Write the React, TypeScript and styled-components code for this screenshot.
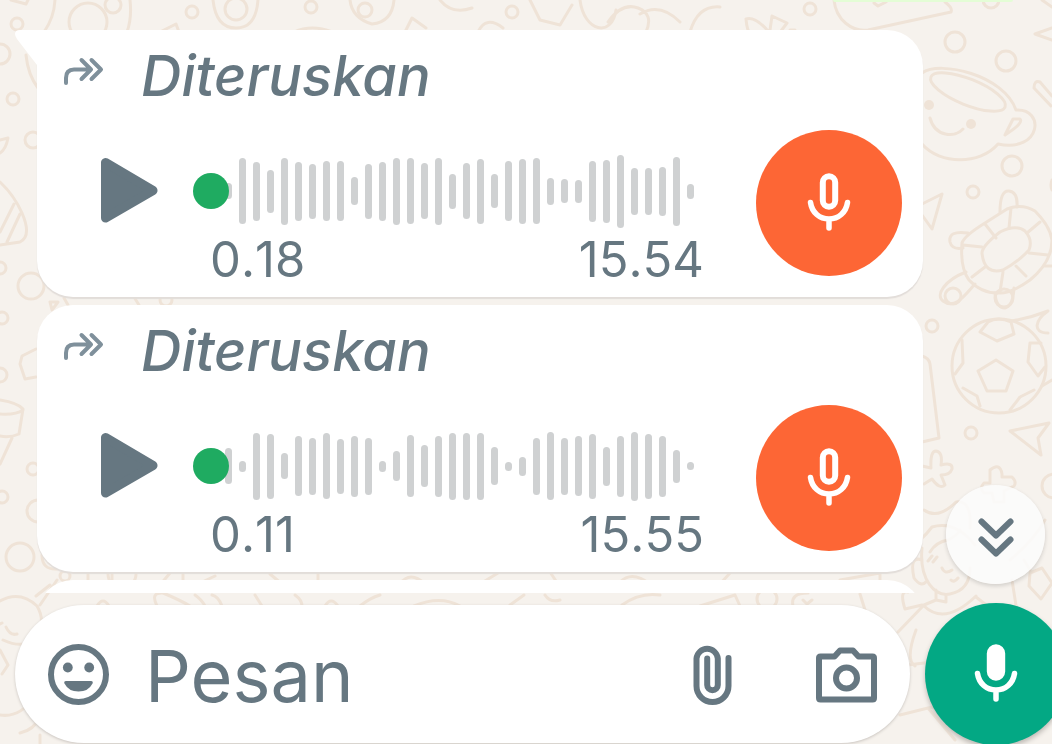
import React from "react";
import styled, { createGlobalStyle } from "styled-components";

const ink = "#667781";

const GlobalStyle = createGlobalStyle`
  * { box-sizing: border-box; }
  body { margin: 0; background: #f6f2ed; font-family: Inter, Roboto, sans-serif; color: ${ink}; }
  button { border: 0; padding: 0; background: none; color: inherit; cursor: pointer; }
`;

const Screen = styled.div`
  position: relative;
  isolation: isolate;
  display: flex;
  flex-direction: column;
  height: 100vh;
  overflow: hidden;
`;

const WallpaperArt = styled.svg`
  position: absolute;
  inset: 0;
  z-index: -1;
  width: 100%;
  height: 100%;
  fill: none;
  stroke: #efe3d7;
  stroke-width: 3;
  stroke-linejoin: round;
  stroke-linecap: round;
`;

const Messages = styled.main`
  flex: 1;
  min-height: 0;
  overflow: hidden;
  display: flex;
  flex-direction: column;
  gap: 8px;
  padding-right: 129px;
  padding-left: 37px;
`;

const OutgoingBubble = styled.div`
  flex: none;
  align-self: flex-end;
  width: 180px;
  height: 2px;
  margin-right: -90px;
  margin-bottom: 20px;
  border-radius: 0 0 8px 8px;
  background: #e4fdd6;
`;

const Bubble = styled.article`
  position: relative;
  flex: none;
  min-height: 267px;
  padding: 18px 21px 21px 25px;
  border-radius: ${(p: { $tail?: boolean }) => (p.$tail ? "0 36px 36px 36px" : "36px")};
  background: #fff;
  box-shadow: 0 2px 1px #e2ddd9;
`;

const Tail = styled.svg`
  position: absolute;
  top: 0;
  left: -22px;
  width: 24px;
  height: 38px;
`;

const Forwarded = styled.header`
  display: flex;
  align-items: center;
  gap: 37px;
  height: 56px;
  margin-bottom: 26px;
  font-size: 56px;
  font-style: italic;
  font-weight: 500;
  line-height: 56px;
`;

const ForwardIcon = styled.svg`
  flex: none;
  width: 42px;
  height: 32px;
  margin-bottom: 8px;
  fill: none;
  stroke: #7f909b;
  stroke-width: 4;
  stroke-linecap: round;
  stroke-linejoin: round;
`;

const Player = styled.div`
  display: flex;
  align-items: flex-start;
`;

const PlayButton = styled.button`
  flex: none;
  width: 60px;
  height: 68px;
  margin: 26px 34px 0 37px;

  svg { display: block; }
`;

const Timeline = styled.div`
  flex: 1;
  min-width: 0;
  margin-right: 52px;
  padding-top: 23px;
`;

const Scrubber = styled.div`
  display: grid;
  height: 76px;
  align-items: center;

  > * { grid-area: 1 / 1; }
`;

const Bars = styled.div`
  display: flex;
  align-items: center;
  justify-content: space-between;
  padding: 0 10px 0 32px;
`;

const Bar = styled.span`
  width: 7px;
  border-radius: 4px;
  background: #cfd1d2;
`;

const Seek = styled.input`
  appearance: none;
  width: 100%;
  height: 36px;
  margin: 0;
  background: transparent;

  &::-webkit-slider-thumb {
    appearance: none;
    width: 36px;
    height: 36px;
    border-radius: 50%;
    background: #1fab61;
  }
`;

const Times = styled.div`
  display: flex;
  justify-content: space-between;
  height: 47px;
  padding-left: 17px;
  font-size: 49px;
  font-kerning: none;
  line-height: 62px;
`;

const VoiceAvatar = styled.div`
  display: grid;
  place-items: center;
  flex: none;
  width: 146px;
  height: 146px;
  border-radius: 50%;
  background: #fd6635;
`;

const Footer = styled.footer`
  display: flex;
  align-items: center;
  gap: 15px;
  flex: none;
  padding: 10px 0 0 15px;
`;

const Composer = styled.form`
  display: flex;
  align-items: center;
  flex: 1;
  min-width: 0;
  height: 138px;
  padding: 0 32px;
  border-radius: 69px;
  background: #fff;
  box-shadow: 0 1px 3px #c9c4bf;
`;

const IconButton = styled.button`
  flex: none;
  width: 64px;
  height: 64px;
  margin-left: ${(p: { $gap?: number }) => p.$gap ?? 0}px;

  svg {
    display: block;
    fill: none;
    stroke: ${ink};
    stroke-width: 6;
    stroke-linejoin: round;
    stroke-linecap: round;
  }
`;

const MessageInput = styled.input`
  flex: 1;
  min-width: 0;
  height: 96px;
  padding: 4px 0 0;
  margin-left: 34px;
  border: 0;
  outline: 0;
  background: transparent;
  color: ${ink};
  font: 400 72px Inter, Roboto, sans-serif;

  &::placeholder { color: ${ink}; opacity: 1; }
`;

const RecordButton = styled.button`
  display: grid;
  place-items: center;
  flex: none;
  width: 142px;
  height: 142px;
  margin-right: -15px;
  margin-bottom: -1px;
  border-radius: 50%;
  && { background: #03a884; }
  box-shadow: 0 3px 5px #bdb9b4;
`;

const ScrollDown = styled.button`
  position: absolute;
  right: 7px;
  bottom: 160px;
  display: grid;
  place-items: center;
  width: 99px;
  height: 99px;
  padding-top: 4px;
  border-radius: 50%;
  && { background: rgba(252, 252, 252, 0.88); }
  box-shadow: 0 2px 4px rgba(0, 0, 0, 0.15);
`;

function MicIcon({ filled }: { filled?: boolean }) {
  return (
    <svg width="44" height="60" viewBox="0 0 44 60" fill="none" stroke="#fff" strokeWidth="5.5" strokeLinecap="round" aria-hidden="true">
      <rect x="15.8" y="3.2" width="12.4" height="30.6" rx="6.2" fill={filled ? "#fff" : "none"} strokeWidth="6" />
      <path d="M3.5 29.5C5 39.500 12.500 46 22 46S39 39.500 40.500 29.500M22 46v9" />
    </svg>
  );
}

type Voice = { position: string; length: string; levels: number[]; tail?: boolean };

const voices: Voice[] = [
  {
    position: "0.18",
    length: "15.54",
    tail: true,
    levels: [16, 66, 59, 43, 67, 59, 55, 60, 60, 28, 55, 59, 67, 66, 56, 67, 35, 56, 65, 34, 60, 65, 66, 27, 24, 23, 61, 63, 73, 47, 47, 49, 69, 15],
  },
  {
    position: "0.11",
    length: "15.55",
    levels: [36, 11, 67, 65, 26, 60, 57, 66, 55, 61, 57, 11, 30, 62, 42, 61, 67, 67, 67, 38, 9, 19, 57, 68, 57, 60, 65, 39, 61, 69, 65, 61, 33, 8],
  },
];

function VoiceMessage({ position, length, levels, tail }: Voice) {
  return (
    <Bubble $tail={tail}>
      {tail && (
        <Tail viewBox="0 0 24 38" aria-hidden="true">
          <path d="M0 4Q0 0 5 0H24V38L22 35L2 9Q0 6 0 4Z" fill="#fff" />
        </Tail>
      )}
      <Forwarded>
        <ForwardIcon viewBox="0 0 42 32" aria-hidden="true">
          <path d="M4 27V22Q4 13.500 12 13.500H29M19.500 4L29 13.500L19.500 23M29.500 4L39 13.500L29.500 23" />
        </ForwardIcon>
        Diteruskan
      </Forwarded>
      <Player>
        <PlayButton type="button" aria-label="Putar">
          <svg width="60" height="68" viewBox="0 0 60 68" fill={ink} stroke={ink} strokeWidth="9" strokeLinejoin="round">
            <path d="M6.500 6.500V62L54 34.500Z" />
          </svg>
        </PlayButton>
        <Timeline>
          <Scrubber>
            <Bars aria-hidden="true">
              {levels.map((level, i) => (
                <Bar key={i} style={{ height: level }} />
              ))}
            </Bars>
            <Seek type="range" min="0" max="100" defaultValue="0" aria-label="Posisi pesan suara" />
          </Scrubber>
          <Times>
            <span>{position}</span>
            <span>{length}</span>
          </Times>
        </Timeline>
        <VoiceAvatar>
          <MicIcon />
        </VoiceAvatar>
      </Player>
    </Bubble>
  );
}

function Wallpaper() {
  const rings = [
    [88, 22, 19], [113, 5, 8], [192, 12, 6], [17, 24, 6], [0, 54, 10], [13, 99, 6], [236, 9, 11], [311, 7, 6],
    [33, 140, 8], [0, 268, 6], [31, 286, 13], [2, 318, 6], [0, 375, 7], [33, 469, 6], [2, 497, 6], [38, 511, 11],
    [20, 557, 14], [65, 576, 5], [122, 574, 14], [365, 10, 7], [512, 12, 6], [810, 9, 6], [955, 42, 10],
    [1006, 61, 10], [1012, 166, 10], [973, 192, 6], [932, 326, 6], [971, 433, 6], [1054, 486, 12], [999, 366, 47],
    [991, 0, 8], [953, 296, 8], [1004, 298, 9], [767, 599, 10], [166, 300, 6],
  ];
  return (
    <WallpaperArt viewBox="0 0 1052 744" preserveAspectRatio="xMidYMid slice" aria-hidden="true">
      {rings.map(([x, y, r]) => (
        <circle key={`${x}-${y}`} cx={x} cy={y} r={r} />
      ))}
      <path d="M55 0Q54 18 44 32M130 0Q132 18 127 32M11 0L26 4L28 0M213 0Q216 28 236 28T258 0M160 32L176 24L179 32M294 32Q312 24 332 32M26 55Q28 75 38 88" />
      <path d="M350 0Q352 18 372 24Q392 22 394 0M405 32L412 18L426 28M440 0Q452 15 472 8M478 32Q486 15 503 28M530 0L540 20L560 25L572 5M580 0C584 32 612 38 616 10M608 22Q622 2 638 8T646 32M640 14Q660 2 680 22M690 32Q698 5 720 7M746 19Q755 16 768 31M746 19Q747 30 750 34M770 30L772 16L787 23L781 31M790 30H795" />
      <path d="M834 0C836 20 852 32 868 30L951 12Q953 8 945 2M874 3L878 6L886 2M1042 0L1052 7M1052 28L1035 34L1052 40M1052 96L1040 82Q1034 80 1034 88L1051 106" />
      <path d="M922 73C940 60 1004 75 1016 110C1045 108 1042 153 998 144C980 165 940 165 922 144M930 118C935 137 955 138 963 129M1005 135L1013 119H1020Q1024 123 1005 135" />
      <ellipse cx="968" cy="92" rx="40" ry="13" transform="rotate(22 968 92)" />
      <g fill="#efe3d7" stroke="none">
        <circle cx="929" cy="105" r="5" />
        <circle cx="971" cy="124" r="5" />
      </g>
      <path d="M920 205L942 194L932 229L922 215M1052 180Q1050 185 1052 190" />
      <path d="M962 243Q964 236 985 223L1007 209Q1022 203 1035 211Q1050 226 1052 240Q1052 262 1030 280Q1012 293 1000 293Q982 294 969 280Q960 268 962 243ZM982 253Q982 246 1000 232Q1016 224 1025 231Q1033 240 1029 250Q1018 262 1003 270Q984 275 982 253Z" />
      <path d="M1011 208L1009 228M1040 222L1027 233M1048 255L1029 253M1026 276L1016 266M1000 292L1003 272M972 277L985 267M963 245L982 247M985 224L996 238M1000 212Q1000 190 1009 191T1017 207M968 233Q948 230 950 242Q952 250 963 248M966 272C945 280 935 295 943 301C955 310 965 295 975 284M995 293Q996 308 1005 308Q1013 306 1014 288M1045 266H1052" />
      <path d="M996 360L1013 371L1006 391L987 391L978 371ZM980 332L997 341L1014 334L1011 322Q998 316 988 322ZM962 340L963 363L955 374M963 388L977 396L980 406M1034 390L1020 397L1010 410M1030 343L1028 362L1038 376L1045 367M1030 343H1041M1012 321Q1030 318 1048 311C1035 320 1032 333 1048 333M1042 386L1052 380" />
      <path d="M1010 431L1049 423L1038 438L1041 455ZM922 356Q929 358 930 364L939 438L922 442" />
      <path d="M922 466L931 468Q930 451 936 451Q943 452 941 465Q953 462 952 469Q950 475 941 475L945 485Q940 490 932 479L924 484M984 483H990V470Q1000 462 1002 474V477H1012Q1017 482 1014 486L1004 491V502H994L992 493H984Q979 488 984 483" />
      <path d="M924 510Q938 520 956 502Q972 500 970 528M922 560Q909 555 914 578Q921 588 927 581M920 540Q926 535 932 527Q955 520 975 545M922 548C919 580 935 597 950 594Q970 590 970 568M930 552Q936 542 948 540Q958 535 960 530M928 561L932 556M933 562L937 557M942 568Q945 575 952 570M951 580Q954 583 958 578M936 590V600L924 605L898 632M908 592Q899 590 905 609L922 605M936 600L946 602V596M924 606Q945 626 976 596M976 597L990 608M916 630Q905 660 915 666M900 666L932 662M900 715L928 708L955 740M928 708L1000 695M1012 580L1018 618M1024 560L1030 570M1030 573L1042 568L1052 583L1041 599L1029 586ZM1010 560Q1034 540 1045 520" />
      <path d="M0 182Q14 195 22 213Q32 236 20 242L0 245M14 204L0 232M20 214L7 242M0 140L8 138Q6 149 0 153M36 349L22 356L20 364L25 379L36 377M0 400Q18 403 23 409L19 434Q10 438 0 436M0 414Q16 415 23 410M12 438L0 464M50 302H58L52 310ZM64 298L68 305M134 297L139 305" />
      <path d="M42 555Q42 570 57 569M50 585L36 596M57 580L40 605M0 601Q20 590 37 606Q46 621 37 637Q25 650 3 640M6 627Q10 636 17 634M0 624L2 623M0 650L8 665L2 674M0 715Q20 718 34 697M20 733Q34 730 40 717Q44 730 54 733M40 744V735M88 580V572M112 574V583M160 585L170 573M183 585V574M215 576L200 583M270 574L282 584M318 583V573M97 606Q103 596 109 606M157 606Q150 592 163 593Q180 600 190 606M195 595Q202 600 205 606M222 606Q218 596 212 595M255 595L262 606M295 595Q302 600 302 606M325 606Q331 596 338 606M360 606Q370 598 380 595M414 606Q440 595 460 606M510 605L524 595M545 595Q550 603 560 600M622 605Q640 592 660 595M700 606L735 595L740 606M793 606Q790 593 808 593M803 600L807 604L812 600M860 594L865 610M840 580L880 573V580M400 584Q410 570 425 584M480 584L498 573M550 572L558 584M620 582Q632 570 650 584M720 584L730 573" />
    </WallpaperArt>
  );
}

export default function App() {
  return (
    <Screen>
      <GlobalStyle />
      <Wallpaper />
      <Messages>
        <OutgoingBubble />
        {voices.map((voice) => (
          <VoiceMessage key={voice.length} {...voice} />
        ))}
        <Bubble />
      </Messages>
      <Footer>
        <Composer>
          <IconButton type="button" aria-label="Emoji">
            <svg width="64" height="64" viewBox="0 0 64 64">
              <circle cx="31.500" cy="32.500" r="27.500" />
              <g fill={ink} stroke="none">
                <circle cx="20.800" cy="25.500" r="4.900" />
                <circle cx="42.200" cy="25.500" r="4.900" />
                <path d="M19 39H44Q46.500 39 45.500 41.500Q41.500 49.500 31.500 49.500T17.500 41.500Q16.500 39 19 39Z" />
              </g>
            </svg>
          </IconButton>
          <MessageInput type="text" placeholder="Pesan" aria-label="Pesan" />
          <IconButton type="button" aria-label="Lampirkan">
            <svg width="64" height="64" viewBox="0 0 64 64">
              <path d="M48.500 16V44A16 16 0 0 1 16.500 44V16.500A10.700 10.700 0 0 1 37.800 16.500V43A5.300 5.300 0 0 1 27.200 43V16.500" />
            </svg>
          </IconButton>
          <IconButton type="button" $gap={70} aria-label="Kamera">
            <svg width="64" height="64" viewBox="0 0 64 64">
              <path d="M6.500 14.500H20.500L26 8.500H39L44.500 14.500H58.500Q60 14.500 60 16V56Q60 57.500 58.500 57.500H6.500Q5 57.500 5 56V16Q5 14.500 6.500 14.500Z" />
              <circle cx="32.500" cy="36" r="10.500" />
            </svg>
          </IconButton>
        </Composer>
        <RecordButton type="button" aria-label="Rekam pesan suara">
          <MicIcon filled />
        </RecordButton>
      </Footer>
      <ScrollDown type="button" aria-label="Ke pesan terbaru">
        <svg width="40" height="44" viewBox="0 0 40 44" fill="none" stroke={ink} strokeWidth="6" strokeLinecap="round" strokeLinejoin="round">
          <path d="M5.500 6.500L20 20.500L34.500 6.500M5.500 24.500L20 38.500L34.500 24.500" />
        </svg>
      </ScrollDown>
    </Screen>
  );
}
